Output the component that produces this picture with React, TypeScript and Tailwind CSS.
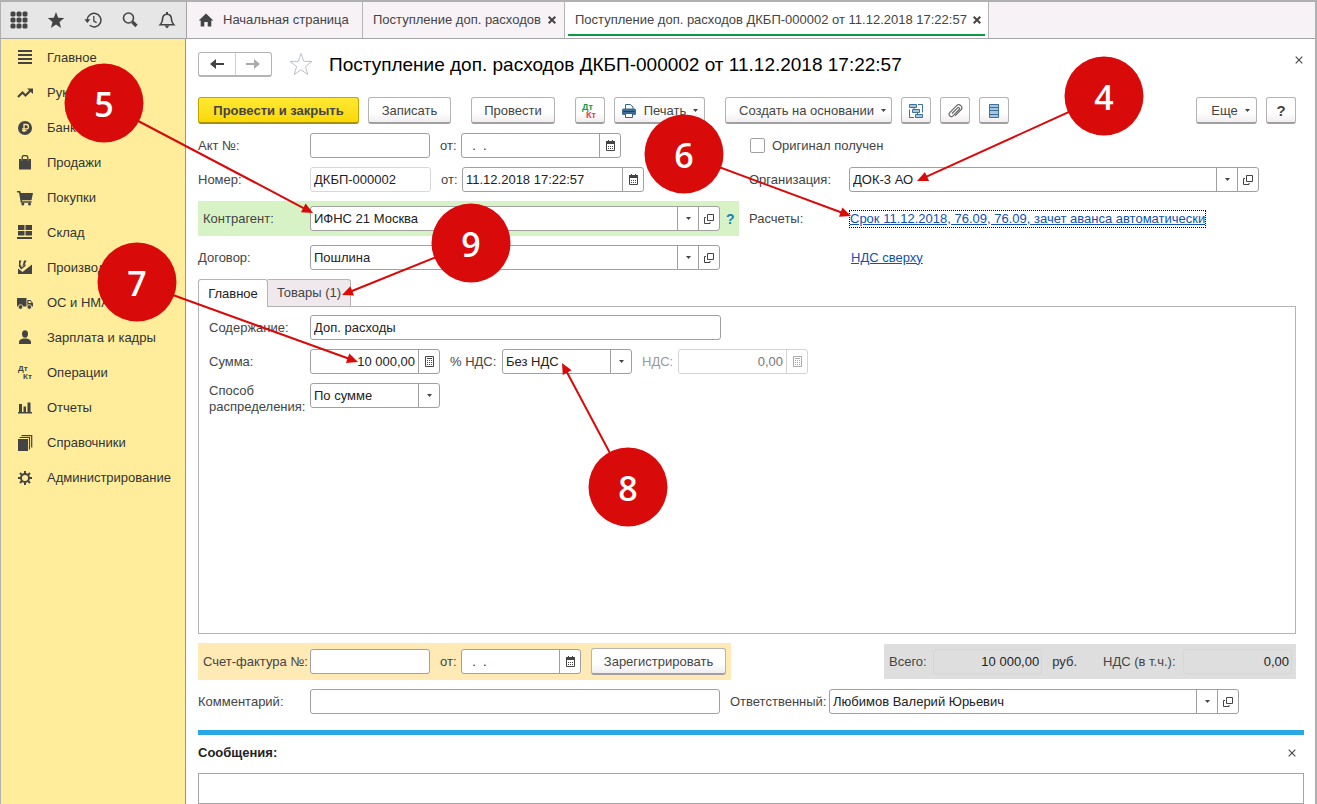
import React from 'react';

type IconProps = { children: React.ReactNode; size?: number; className?: string };

function Svg({ children, size = 16, className = '' }: IconProps) {
  return (
    <svg width={size} height={size} viewBox={`0 0 ${size} ${size}`} fill="currentColor" className={`shrink-0 ${className}`} aria-hidden="true">
      {children}
    </svg>
  );
}

const GridIcon = () => (
  <Svg size={18}>
    {[1, 7, 13].map((y) => [1, 7, 13].map((x) => <rect key={`${x}-${y}`} x={x - 0.5} y={y - 0.5} width="5" height="5" rx="1.6" />))}
  </Svg>
);
const StarIcon = () => (
  <Svg size={18}>
    <path d="M9 1l2.200 5.800 6 .3-4.700 3.800 1.600 6L9 13.500l-5.100 3.400 1.600-6L.8 7.100l6-.3z" />
  </Svg>
);
const HistoryIcon = () => (
  <Svg size={18}>
    <path d="M3.300 9.500A6.800 6.800 0 1 1 5.700 14.300" fill="none" stroke="currentColor" strokeWidth="1.500" />
    <path d="M.4 8.300h6L3.300 12z" />
    <path d="M9.800 5v5l2.800 1.600" fill="none" stroke="currentColor" strokeWidth="1.300" />
  </Svg>
);
const SearchIcon = () => (
  <Svg size={18}>
    <circle cx="7.500" cy="7" r="5" fill="none" stroke="currentColor" strokeWidth="1.600" />
    <path d="M11.500 11l4 4" stroke="currentColor" strokeWidth="3.200" />
  </Svg>
);
const BellIcon = () => (
  <Svg size={18}>
    <path d="M2.200 13.700c1.600-1.700 2.300-3 2.300-5.200 0-3.400 1.600-5.300 4.500-5.300s4.500 1.900 4.500 5.300c0 2.200.7 3.500 2.300 5.200z" fill="none" stroke="currentColor" strokeWidth="1.600" />
    <path d="M8 1h2v2H8zM6.500 14.500h5L9 17.500z" />
  </Svg>
);
const HomeIcon = () => (
  <Svg>
    <path d="M8 1.500l7.300 7h-2V14.500H9.700V10H6.300v4.500H2.700V8.500h-2z" />
  </Svg>
);

const MenuIcon = () => (
  <Svg>
    <path d="M1 0h14v2H1zM1 4h14v2H1zM1 8h14v2H1zM1 12h14v2H1z" />
  </Svg>
);
const TrendIcon = () => (
  <Svg>
    <path d="M1 12l4.500-4.500 3 3L13.500 5.500" fill="none" stroke="currentColor" strokeWidth="2.200" />
    <path d="M10 3.500h6v5.500z" />
  </Svg>
);
const RubleIcon = () => (
  <Svg>
    <circle cx="8" cy="8" r="7" />
    <path d="M7 12V4.500h2.300a2.100 2.100 0 0 1 0 4.300H5M5 10.700h4.500" fill="none" stroke="#ffed9b" strokeWidth="1.300" />
  </Svg>
);
const BagIcon = () => (
  <Svg>
    <path d="M2 4h2.500v2h1.300V4h4.400v2h1.300V4H14v10.500H2z" />
    <path d="M5.200 6V2.500C5.200 .8 6.300 .5 8 .5s2.800.3 2.800 2V6" fill="none" stroke="currentColor" strokeWidth="1.300" />
  </Svg>
);
const CartIcon = () => (
  <Svg>
    <path d="M0 1h3.300l.5 2H16l-1.500 7.300H4.800l.3 1h9.400v1.500H3.800L2 2.500H0z" />
    <circle cx="5.800" cy="14" r="1.500" />
    <circle cx="12.500" cy="14" r="1.500" />
  </Svg>
);
const StoreIcon = () => (
  <Svg>
    <path d="M1 0h6.500v5H1zM8.500 0H15v5H8.500zM1 6h6.500v4.500H1zM8.500 6H15v4.500H8.500zM0 12h15v2H0z" />
  </Svg>
);
const FactoryIcon = () => (
  <Svg>
    <path d="M1 8.500l4.500 3.500L15 4.500V14H1z" />
    <path d="M2 6V.5h2.500L3.500 3v3zM5.500 6L7 .5h2.500L7.500 5z" />
    <path d="M1.500 5.500h3v2l4-3.500v2L4 9.500z" />
  </Svg>
);
const TruckIcon = () => (
  <Svg>
    <path d="M0 3h9.500v8.500H0zM10.300 5h3.200L16 8.300v3.200h-5.700z" />
    <circle cx="3.500" cy="12" r="2.300" stroke="#ffed9b" strokeWidth=".8" />
    <circle cx="12.300" cy="12" r="2.300" stroke="#ffed9b" strokeWidth=".8" />
    <path d="M11.500 6h1.700l1.500 2h-3.200z" fill="#ffed9b" />
  </Svg>
);
const PersonIcon = () => (
  <Svg>
    <ellipse cx="8" cy="4" rx="3" ry="3.700" />
    <path d="M2 14v-2c0-2 2-3 4.300-3.500h3.400c2.300.5 4.300 1.500 4.300 3.500v2z" />
  </Svg>
);
const DtKtIcon = () => (
  <span className="flex h-4 w-4 shrink-0 flex-col justify-center font-bold text-[8px] leading-[8px]" aria-hidden="true">
    <span className="pl-px">Дт</span>
    <span className="pl-[6px]">Кт</span>
  </span>
);
const ChartIcon = () => (
  <Svg>
    <path d="M2 4h3v8H2zM6.500 6.500h2.500V12H6.500zM10.500 2.500h3V12h-3zM1 12h14v1.500H1z" />
  </Svg>
);
const BooksIcon = () => (
  <Svg>
    <path d="M1 4h10v12H1z" />
    <path d="M2.500 2.500h10v12M4.500 .6h10.200v12" fill="none" stroke="currentColor" strokeWidth="1.200" />
  </Svg>
);
const GearIcon = () => (
  <Svg>
    <circle cx="8" cy="8" r="4" fill="none" stroke="currentColor" strokeWidth="1.900" />
    <path d="M8 1v3M8 12v3M1 8h3M12 8h3M3 3l2.200 2.200M10.800 10.800L13 13M13 3l-2.200 2.200M5.200 10.800L3 13" stroke="currentColor" strokeWidth="2" />
  </Svg>
);

const CalendarIcon = () => (
  <svg width="11" height="11" viewBox="0 0 11 11" fill="none" aria-hidden="true">
    <path d="M1.500 2.500h8v8h-8z" stroke="#444" />
    <path d="M1 1h9v3H1zM3 0h1v1H3zM7 0h1v1H7z" fill="#444" />
    <path d="M3 6.500h5M3 8.500h5" stroke="#444" strokeDasharray="1 1" />
  </svg>
);
const CalcIcon = ({ muted }: { muted?: boolean }) => (
  <svg width="11" height="13" viewBox="0 0 11 13" fill="none" stroke={muted ? '#aaa' : '#444'} aria-hidden="true">
    <path d="M1.500 1.500h8v10h-8zM3 3.500h5" />
    <path d="M3 5.500h5M3 7.500h5M3 9.500h5" strokeDasharray="1 1" />
  </svg>
);
const OpenIcon = () => (
  <svg width="10" height="10" viewBox="0 0 10 10" fill="none" stroke="#444" aria-hidden="true">
    <path d="M3.500.5h6v6h-6zM2 3.500H.5v6h5.500V8" />
  </svg>
);
const Caret = () => (
  <svg width="5" height="3" viewBox="0 0 5 3" aria-hidden="true" className="shrink-0">
    <path d="M0 0h5L2.500 3z" fill="#444" />
  </svg>
);
const Cross = ({ bold }: { bold?: boolean }) => (
  <svg width="8" height="8" viewBox="0 0 8 8" stroke="#444" strokeWidth={bold ? 2 : 1.100} aria-hidden="true">
    <path d="M.7.7l6.600 6.600M7.300.7L.7 7.300" />
  </svg>
);
const PrinterIcon = () => (
  <svg width="16" height="16" viewBox="0 0 16 16" aria-hidden="true" className="shrink-0">
    <path d="M4.500 6V1.500h5L12 4v2" fill="#fff" stroke="#3b6386" />
    <rect x="1" y="5.500" width="14" height="6.500" rx="1.500" fill="#3b6c96" />
    <path d="M2.500 8.500h11" stroke="#1f3f5c" />
    <path d="M4.500 10.500h7v4h-7z" fill="#fff" stroke="#3b6386" />
  </svg>
);
const StructureIcon = () => (
  <svg width="16" height="16" viewBox="0 0 16 16" fill="#a5c6e2" stroke="#3d7199" aria-hidden="true">
    <path d="M1.500 1.500h7v3h-7zM4.500 6.500h7v3h-7zM7.500 11.500h7v3h-7z" />
    <path d="M10 1.500h4.500v8M1.500 6.500v8H6M6 4.500v2M9.500 9.500v2" fill="none" />
  </svg>
);
const ClipIcon = () => (
  <svg width="16" height="16" viewBox="0 0 16 16" fill="none" stroke="#666" strokeWidth="1.200" aria-hidden="true">
    <path d="M5 10.500l5.500-5.700a1.200 1.200 0 0 1 1.700 1.700l-6.200 6.300a2.200 2.200 0 0 1-3.200-3.200l6.800-7a3 3 0 0 1 4.300 4.300l-5.800 6" />
  </svg>
);
const ListIcon = () => (
  <svg width="12" height="16" viewBox="0 0 12 16" fill="#a5c6e2" stroke="#3d7199" aria-hidden="true">
    <path d="M1.500 1.500h9v13h-9zM1.500 4.500h9M1.500 7.500h9M1.500 11.500h9" />
  </svg>
);
const Arrow = ({ right }: { right?: boolean }) => (
  <svg width="16" height="10" viewBox="0 0 16 10" aria-hidden="true" fill={right ? '#aaa' : '#444'}>
    {right ? <path d="M1 4h8V0l6 5-6 5V6H1z" /> : <path d="M15 4H7V0L1 5l6 5V6h8z" />}
  </svg>
);

const box = 'h-[25px] rounded-[3px] border border-[#a0a0a0] bg-white';
const bare = 'min-w-0 w-full flex-1 bg-transparent px-[3px] text-[#222] outline-none';
const cell = 'flex h-full w-[21px] shrink-0 items-center justify-center border-l border-[#a0a0a0]';
const btn =
  'flex h-[27px] shrink-0 items-center justify-center rounded-[3px] border border-b-2 border-[#b4b4b4] border-b-[#a0a0a0] bg-gradient-to-b from-white from-60% to-[#f1edf0] pt-px text-[#444] whitespace-nowrap';

function DateField({ id, label, value, width }: { id: string; label: string; value: string; width: string }) {
  return (
    <div className={`flex overflow-hidden ${box} ${width}`}>
      <input id={id} aria-label={label} className={`${bare} whitespace-pre`} defaultValue={value} />
      <button type="button" aria-label="Выбрать дату" className={cell}>
        <CalendarIcon />
      </button>
    </div>
  );
}

function Picker({ id, value, width, open }: { id: string; value: string; width: string; open?: boolean }) {
  return (
    <div className={`flex overflow-hidden ${box} ${width}`}>
      <div className="relative flex min-w-0 flex-1">
        <select id={id} className={`${bare} appearance-none pr-6`} defaultValue={value}>
          <option>{value}</option>
        </select>
        <span className={`pointer-events-none absolute right-0 top-0 ${cell}`}>
          <Caret />
        </span>
      </div>
      {open && (
        <button type="button" aria-label="Открыть" className={cell}>
          <OpenIcon />
        </button>
      )}
    </div>
  );
}

const menu: [string, () => React.ReactElement][] = [
  ['Главное', MenuIcon],
  ['Руководителю', TrendIcon],
  ['Банк и касса', RubleIcon],
  ['Продажи', BagIcon],
  ['Покупки', CartIcon],
  ['Склад', StoreIcon],
  ['Производство', FactoryIcon],
  ['ОС и НМА', TruckIcon],
  ['Зарплата и кадры', PersonIcon],
  ['Операции', DtKtIcon],
  ['Отчеты', ChartIcon],
  ['Справочники', BooksIcon],
  ['Администрирование', GearIcon],
];

const tools: [string, () => React.ReactElement][] = [
  ['Разделы', GridIcon],
  ['Избранное', StarIcon],
  ['История', HistoryIcon],
  ['Поиск', SearchIcon],
  ['Уведомления', BellIcon],
];

type Callout = { n: number; x: number; y: number; tx: number; ty: number };
const callouts: Callout[] = [
  { n: 4, x: 1104, y: 96, tx: 917, ty: 181 },
  { n: 5, x: 104, y: 103, tx: 313, ty: 213 },
  { n: 6, x: 684, y: 154, tx: 851, ty: 216 },
  { n: 7, x: 137, y: 282, tx: 358, ty: 362 },
  { n: 8, x: 628, y: 487, tx: 562, ty: 363 },
  { n: 9, x: 471, y: 243, tx: 342, ty: 295 },
];

function Callouts() {
  return (
    <div className="pointer-events-none absolute inset-0 z-20 overflow-hidden">
      <svg className="absolute inset-0 h-full w-full" aria-hidden="true">
        {callouts.map(({ n, x, y, tx, ty }) => {
          const len = Math.hypot(tx - x, ty - y);
          const angle = (Math.atan2(ty - y, tx - x) * 180) / Math.PI;
          return (
            <g key={n} transform={`translate(${x} ${y}) rotate(${angle})`} fill="#d90a0a">
              <rect x="0" y="-1" width={len - 8} height="2" />
              <path d={`M${len} 0l-11-5v10z`} />
            </g>
          );
        })}
      </svg>
      {callouts.map(({ n, x, y }) => (
        <div
          key={n}
          className="absolute flex h-[79px] w-[79px] -translate-x-1/2 -translate-y-1/2 items-center justify-center rounded-full bg-[#d90a0a] font-['Open_Sans',sans-serif] text-[34px] font-semibold text-white"
          style={{ left: x, top: y }}
        >
          {n}
        </div>
      ))}
    </div>
  );
}

export default function App() {
  return (
    <div className="relative font-['Liberation_Sans',sans-serif] text-[13px] leading-4 text-[#444]">
      <div className="flex min-h-screen flex-col border-l border-r-2 border-t-2 border-[#b0b0b0] bg-white">
        <header className="flex h-[37px] shrink-0 border-b border-[#a5a5a5] bg-[#f7f2f6]">
          <div className="flex w-[186px] shrink-0 items-center justify-between border-r border-[#a5a5a5] bg-[#e6e6e6] pl-[9px] pr-[10px]">
            {tools.map(([name, Icon]) => (
              <button key={name} type="button" aria-label={name}>
                <Icon />
              </button>
            ))}
          </div>
          <nav className="flex min-w-0">
            <a href="#home" className="flex w-[176px] items-center gap-[9px] border-r border-[#b4b4b4] pl-[11px] whitespace-nowrap">
              <HomeIcon />
              Начальная страница
            </a>
            <div className="flex w-[202px] items-center justify-between border-r border-[#b4b4b4] pl-[10px] pr-2 whitespace-nowrap">
              <a href="#list">Поступление доп. расходов</a>
              <button type="button" aria-label="Закрыть вкладку">
                <Cross bold />
              </button>
            </div>
            <div className="flex w-[424px] border-r border-[#b4b4b4] bg-white px-[3px] pb-[2px]">
              <div className="flex flex-1 items-center justify-between border-b-2 border-[#0c9a44] pl-[7px] pr-1 pt-[3px] whitespace-nowrap">
                <a href="#doc">Поступление доп. расходов ДКБП-000002 от 11.12.2018 17:22:57</a>
                <button type="button" aria-label="Закрыть вкладку">
                  <Cross bold />
                </button>
              </div>
            </div>
          </nav>
        </header>

        <div className="flex flex-1">
          <aside className="w-[185px] shrink-0 border-r border-[#b8a000] bg-[#ffed9b] pt-px">
            {menu.map(([name, Icon]) => (
              <a key={name} href="#section" className="flex h-[35px] items-center gap-[14px] pl-4 text-[#333]">
                <span className="text-[#444]">
                  <Icon />
                </span>
                {name}
              </a>
            ))}
          </aside>

          <main className="flex min-w-0 flex-1 flex-col pl-3">
            <div className="flex flex-1 flex-col pr-[19px]">
              <div className="flex items-center pt-3">
                <div className="flex h-[25px] w-[74px] rounded-[3px] border border-b-2 border-[#b4b4b4]">
                  <button type="button" aria-label="Назад" className="flex flex-1 items-center justify-center border-r border-[#d0d0d0]">
                    <Arrow />
                  </button>
                  <button type="button" aria-label="Вперед" className="flex flex-1 items-center justify-center">
                    <Arrow right />
                  </button>
                </div>
                <button type="button" aria-label="В избранное" className="ml-[17px]">
                  <svg width="24" height="24" viewBox="0 0 24 24" fill="none" stroke="#b9c2cc" aria-hidden="true">
                    <path d="M12 1.500l2.700 7.800 8.300.2-6.600 5 2.400 8L12 17.800l-6.800 4.700 2.400-8L1 9.500l8.300-.2z" />
                  </svg>
                </button>
                <h1 className="ml-4 pt-0.5 text-[19px] leading-6 text-black">Поступление доп. расходов ДКБП-000002 от 11.12.2018 17:22:57</h1>
                <button type="button" aria-label="Закрыть" className="-mr-[7px] mb-2 ml-auto">
                  <Cross />
                </button>
              </div>

              <div className="mt-5 flex gap-5">
                <div className="flex gap-[9px]">
                  <button
                    type="button"
                    className="flex h-[27px] w-[161px] items-center justify-center rounded-[3px] border border-b-2 border-[#c2a500] border-b-[#a89000] bg-gradient-to-b from-[#ffe930] to-[#fbd800] pt-px font-bold whitespace-nowrap"
                  >
                    Провести и закрыть
                  </button>
                  <button type="button" className={`${btn} w-[83px]`}>Записать</button>
                </div>
                <button type="button" className={`${btn} w-[84px]`}>Провести</button>
                <div className="flex gap-[9px]">
                  <button type="button" aria-label="Дт/Кт" className={`${btn} w-[30px]`}>
                    <span className="flex w-4 flex-col text-left text-[9px] font-bold leading-[8px]">
                      <span className="text-[#0c9a44]">Дт</span>
                      <span className="pl-1 text-[#e04040]">Кт</span>
                    </span>
                  </button>
                  <button type="button" className={`${btn} w-[91px] gap-[7px]`}>
                    <PrinterIcon />
                    Печать
                    <Caret />
                  </button>
                </div>
                <div className="flex gap-[9px]">
                  <button type="button" className={`${btn} w-[167px] gap-[7px] pl-2`}>
                    Создать на основании
                    <Caret />
                  </button>
                  <button type="button" aria-label="Структура подчиненности" className={`${btn} w-[30px]`}>
                    <StructureIcon />
                  </button>
                  <button type="button" aria-label="Файлы" className={`${btn} w-[30px]`}>
                    <ClipIcon />
                  </button>
                  <button type="button" aria-label="Список" className={`${btn} w-[30px]`}>
                    <ListIcon />
                  </button>
                </div>
                <div className="ml-auto flex gap-[9px]">
                  <button type="button" className={`${btn} w-[61px] gap-[7px] pl-2`}>
                    Еще
                    <Caret />
                  </button>
                  <button type="button" aria-label="Справка" className={`${btn} w-[30px] text-[15px] font-bold`}>?</button>
                </div>
              </div>

              <div className="mt-[9px] flex gap-[10px]">
                <div className="flex w-[541px] shrink-0 flex-col gap-[9px]">
                  <div className="flex items-center">
                    <label htmlFor="act" className="w-[112px]">Акт №:</label>
                    <input id="act" className={`w-[120px] px-[3px] ${box}`} />
                    <label htmlFor="act-date" className="w-[31px] pl-[10px]">от:</label>
                    <DateField id="act-date" label="Дата акта" value="  .  ." width="w-[160px]" />
                  </div>
                  <div className="flex items-center">
                    <label htmlFor="number" className="w-[112px]">Номер:</label>
                    <input id="number" className="h-[25px] w-[121px] rounded-[3px] border border-[#d8d8d8] px-[3px] text-[#222]" defaultValue="ДКБП-000002" />
                    <label htmlFor="doc-date" className="w-[31px] pl-[10px]">от:</label>
                    <DateField id="doc-date" label="Дата документа" value="11.12.2018 17:22:57" width="w-[182px]" />
                  </div>
                  <div className="flex h-[35px] items-center bg-[#d7f3c6] pl-[5px]">
                    <label htmlFor="partner" className="w-[107px]">Контрагент:</label>
                    <Picker id="partner" value="ИФНС 21 Москва" width="w-[410px]" open />
                    <button type="button" aria-label="Подсказка" className="pl-1.5 text-sm font-bold text-[#1a80b8]">?</button>
                  </div>
                  <div className="flex items-center">
                    <label htmlFor="contract" className="w-[112px]">Договор:</label>
                    <Picker id="contract" value="Пошлина" width="w-[410px]" open />
                  </div>
                </div>
                <div className="flex min-w-0 flex-1 flex-col gap-[9px]">
                  <label className="flex h-[25px] items-center gap-[7px]">
                    <input type="checkbox" className="ml-px h-[15px] w-[15px] appearance-none rounded-[2px] border border-[#a0a0a0]" />
                    Оригинал получен
                  </label>
                  <div className="flex items-center">
                    <label htmlFor="org" className="w-[100px] shrink-0">Организация:</label>
                    <Picker id="org" value="ДОК-3 АО" width="w-full max-w-[410px]" open />
                  </div>
                  <div className="flex h-[35px] items-center">
                    <span className="w-[100px] shrink-0">Расчеты:</span>
                    <a href="#terms" className="border border-dotted border-black text-[#0f52b0] underline whitespace-nowrap">
                      Срок 11.12.2018, 76.09, 76.09, зачет аванса автоматически
                    </a>
                  </div>
                  <div className="flex h-[25px] items-center pl-[102px]">
                    <a href="#vat" className="text-[#0f52b0] underline">НДС сверху</a>
                  </div>
                </div>
              </div>

              <div role="tablist" className="z-10 mt-[9px] flex h-[28px]">
                <button type="button" role="tab" aria-selected="true" className="w-[70px] rounded-t-[3px] border border-b-0 border-[#b4b4b4] bg-white text-[#222]">Главное</button>
                <button type="button" role="tab" aria-selected="false" className="w-[83px] rounded-tr-[3px] border border-l-0 border-[#b4b4b4] bg-[#efe9ee]">Товары (1)</button>
              </div>
              <section className="-mt-px flex flex-1 flex-col gap-[9px] border border-[#b4b4b4] px-[10px] pb-4 pt-2">
                <div className="flex items-center">
                  <label htmlFor="content" className="w-[101px]">Содержание:</label>
                  <input id="content" className={`w-[411px] px-[3px] text-[#222] ${box}`} defaultValue="Доп. расходы" />
                </div>
                <div className="flex items-center">
                  <label htmlFor="sum" className="w-[101px]">Сумма:</label>
                  <div className={`flex w-[130px] overflow-hidden ${box}`}>
                    <input id="sum" className={`${bare} text-right`} defaultValue="10 000,00" />
                    <button type="button" aria-label="Калькулятор" className={cell}>
                      <CalcIcon />
                    </button>
                  </div>
                  <label htmlFor="vat-rate" className="w-[62px] pl-[10px]">% НДС:</label>
                  <Picker id="vat-rate" value="Без НДС" width="w-[130px]" />
                  <label htmlFor="vat-sum" className="w-[46px] pl-[10px] text-[#999]">НДС:</label>
                  <div className="flex h-[25px] w-[130px] overflow-hidden rounded-[3px] border border-[#d4d4d4]">
                    <input id="vat-sum" disabled className="w-full min-w-0 flex-1 px-[3px] text-right text-[#777]" defaultValue="0,00" />
                    <button type="button" disabled aria-label="Калькулятор" className="flex w-[21px] shrink-0 items-center justify-center border-l border-[#d4d4d4]">
                      <CalcIcon muted />
                    </button>
                  </div>
                </div>
                <div className="flex items-start">
                  <label htmlFor="method" className="w-[101px]">
                    Способ
                    <br />
                    распределения:
                  </label>
                  <Picker id="method" value="По сумме" width="w-[130px]" />
                </div>
              </section>

              <div className="mt-[9px] flex items-center justify-between">
                <div className="flex h-[37px] w-[533px] items-center bg-[#ffe9b5] pl-[5px]">
                  <label htmlFor="invoice" className="w-[107px]">Счет-фактура №:</label>
                  <input id="invoice" className={`w-[120px] px-[3px] ${box}`} />
                  <label htmlFor="invoice-date" className="w-[31px] pl-[10px]">от:</label>
                  <DateField id="invoice-date" label="Дата счета-фактуры" value="  .  ." width="w-[120px]" />
                  <button type="button" className={`${btn} ml-[10px] w-[135px]`}>Зарегистрировать</button>
                </div>
                <div className="flex h-[35px] w-[412px] items-center bg-[#dedede] pl-[5px] pr-1">
                  <label htmlFor="total">Всего:</label>
                  <input id="total" readOnly className="ml-auto h-[25px] w-[109px] rounded-[3px] border border-[#d6d6d6] px-[2px] text-right text-[#222]" value="10 000,00" />
                  <span className="ml-[10px] text-[#333]">руб.</span>
                  <label htmlFor="total-vat" className="ml-[26px] w-[80px]">НДС (в т.ч.):</label>
                  <input id="total-vat" readOnly className="h-[25px] w-[109px] rounded-[3px] border border-[#d6d6d6] px-[2px] text-right text-[#222]" value="0,00" />
                </div>
              </div>

              <div className="mt-[9px] flex items-center">
                <label htmlFor="comment" className="w-[112px] shrink-0">Комментарий:</label>
                <input id="comment" className={`w-[410px] px-[3px] ${box}`} />
                <label htmlFor="owner" className="w-[109px] shrink-0 pl-[10px]">Ответственный:</label>
                <Picker id="owner" value="Любимов Валерий Юрьевич" width="w-[410px]" open />
              </div>
            </div>

            <section className="mr-[11px] mt-4 border-t-[5px] border-[#2aa8e6]">
              <div className="flex h-[38px] items-center justify-between pb-[2px] pr-2">
                <h2 className="font-bold text-[#222]">Сообщения:</h2>
                <button type="button" aria-label="Закрыть сообщения">
                  <Cross />
                </button>
              </div>
              <div className="h-[31px] border border-[#a5a5a5]" />
            </section>
          </main>
        </div>
      </div>
      <Callouts />
    </div>
  );
}
